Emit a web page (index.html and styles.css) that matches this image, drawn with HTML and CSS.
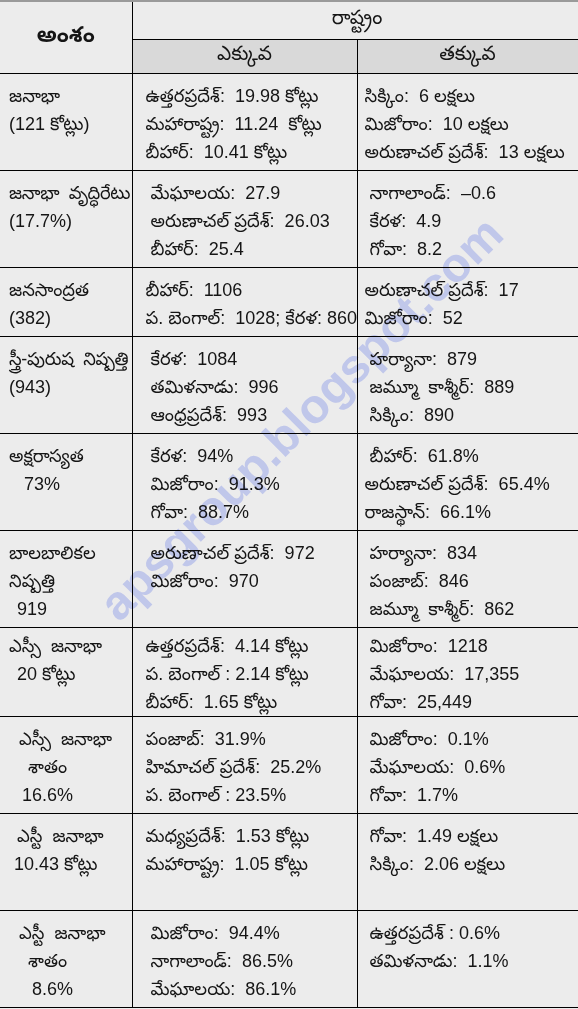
FILE: index.html
```html
<!DOCTYPE html>
<html lang="te">
<head>
<meta charset="utf-8">
<title>జనాభా గణాంకాలు</title>
<link rel="stylesheet" href="styles.css">
</head>
<body>
<div class="sheet">
<table class="grid">
  <colgroup><col class="c1"><col class="c2"><col class="c3"></colgroup>
  <thead>
    <tr class="hr1"><th rowspan="2" class="h-main">అంశం</th><th colspan="2" class="h-state">రాష్ట్రం</th></tr>
    <tr class="hr2"><th class="h-sub">ఎక్కువ</th><th class="h-sub">తక్కువ</th></tr>
  </thead>
  <tbody>
    <tr class="r3">
      <td class="k"><div>జనాభా</div><div>(121 కోట్లు)</div></td>
      <td class="m"><div>ఉత్తరప్రదేశ్:  19.98 కోట్లు</div><div>మహారాష్ట్ర:  11.24  కోట్లు</div><div>బీహార్:  10.41 కోట్లు</div></td>
      <td class="l"><div>సిక్కిం:  6 లక్షలు</div><div>మిజోరాం:  10 లక్షలు</div><div>అరుణాచల్ ప్రదేశ్:  13 లక్షలు</div></td>
    </tr>
    <tr class="r3">
      <td class="k"><div class="tk">జనాభా  వృద్ధిరేటు</div><div>(17.7%)</div></td>
      <td class="m"><div class="i1">మేఘాలయ:  27.9</div><div class="i1">అరుణాచల్ ప్రదేశ్:  26.03</div><div class="i1">బీహార్:  25.4</div></td>
      <td class="l"><div class="i1">నాగాలాండ్:  –0.6</div><div class="i1">కేరళ:  4.9</div><div class="i1">గోవా:  8.2</div></td>
    </tr>
    <tr class="r2">
      <td class="k"><div>జనసాంద్రత</div><div>(382)</div></td>
      <td class="m"><div>బీహార్:  1106</div><div>ప. బెంగాల్:  1028; కేరళ: 860</div></td>
      <td class="l"><div>అరుణాచల్ ప్రదేశ్:  17</div><div>మిజోరాం:  52</div></td>
    </tr>
    <tr class="r3">
      <td class="k"><div class="tk">స్త్రీ-పురుష  నిష్పత్తి</div><div>(943)</div></td>
      <td class="m"><div class="i1">కేరళ:  1084</div><div class="i1">తమిళనాడు:  996</div><div class="i1">ఆంధ్రప్రదేశ్:  993</div></td>
      <td class="l"><div class="i1">హర్యానా:  879</div><div class="i1">జమ్మూ  కాశ్మీర్:  889</div><div class="i1">సిక్కిం:  890</div></td>
    </tr>
    <tr class="r3">
      <td class="k"><div>అక్షరాస్యత</div><div class="i5">73%</div></td>
      <td class="m"><div class="i1">కేరళ:  94%</div><div class="i1">మిజోరాం:  91.3%</div><div class="i1">గోవా:  88.7%</div></td>
      <td class="l"><div class="i1">బీహార్:  61.8%</div><div>అరుణాచల్ ప్రదేశ్:  65.4%</div><div>రాజస్థాన్:  66.1%</div></td>
    </tr>
    <tr class="r3">
      <td class="k"><div>బాలబాలికల</div><div>నిష్పత్తి</div><div class="i2">919</div></td>
      <td class="m"><div class="i1">అరుణాచల్ ప్రదేశ్:  972</div><div class="i1">మిజోరాం:  970</div></td>
      <td class="l"><div class="i1">హర్యానా:  834</div><div class="i1">పంజాబ్:  846</div><div class="i1">జమ్మూ  కాశ్మీర్:  862</div></td>
    </tr>
    <tr class="r3 tight">
      <td class="k"><div>ఎస్సీ  జనాభా</div><div class="i2">20 కోట్లు</div></td>
      <td class="m"><div>ఉత్తరప్రదేశ్:  4.14 కోట్లు</div><div>ప. బెంగాల్ : 2.14 కోట్లు</div><div>బీహార్:  1.65 కోట్లు</div></td>
      <td class="l"><div class="i1">మిజోరాం:  1218</div><div class="i1">మేఘాలయ:  17,355</div><div class="i1">గోవా:  25,449</div></td>
    </tr>
    <tr class="r3">
      <td class="k"><div class="i3">ఎస్సీ  జనాభా</div><div class="i6">శాతం</div><div class="i4">16.6%</div></td>
      <td class="m"><div>పంజాబ్:  31.9%</div><div>హిమాచల్ ప్రదేశ్:  25.2%</div><div>ప. బెంగాల్ : 23.5%</div></td>
      <td class="l"><div class="i1">మిజోరాం:  0.1%</div><div class="i1">మేఘాలయ:  0.6%</div><div class="i1">గోవా:  1.7%</div></td>
    </tr>
    <tr class="r3">
      <td class="k"><div class="i2">ఎస్టీ  జనాభా</div><div class="i1">10.43 కోట్లు</div></td>
      <td class="m"><div>మధ్యప్రదేశ్:  1.53 కోట్లు</div><div>మహారాష్ట్ర:  1.05 కోట్లు</div></td>
      <td class="l"><div class="i1">గోవా:  1.49 లక్షలు</div><div class="i1">సిక్కిం:  2.06 లక్షలు</div></td>
    </tr>
    <tr class="r3">
      <td class="k"><div class="i3">ఎస్టీ  జనాభా</div><div class="i6">శాతం</div><div class="i7">8.6%</div></td>
      <td class="m"><div class="i1">మిజోరాం:  94.4%</div><div class="i1">నాగాలాండ్:  86.5%</div><div class="i1">మేఘాలయ:  86.1%</div></td>
      <td class="l"><div class="i1">ఉత్తరప్రదేశ్ : 0.6%</div><div class="i1">తమిళనాడు:  1.1%</div></td>
    </tr>
  </tbody>
</table>
<div class="watermark">apsgroup.blogspot.com</div>
</div>
</body>
</html>
```
FILE: styles.css
```css
html, body {
  margin: 0;
  padding: 0;
  background: #ececec;
}

.sheet {
  position: relative;
  width: 578px;
  height: 1009px;
  overflow: hidden;
  background: #ececec;
  border-top: 2px solid #9a9a9a;
  box-sizing: border-box;
}

.grid {
  border-collapse: collapse;
  table-layout: fixed;
  width: 578px;
  font-family: "Liberation Sans", "Noto Sans Telugu", "Noto Sans", sans-serif;
  font-size: 18px;
  color: #151515;
}

.c1 { width: 132px; }
.c2 { width: 225px; }
.c3 { width: 221px; }

.grid th,
.grid td {
  border: 1px solid #000;
  padding: 0;
}

.grid tr > :first-child { border-left: none; }
.grid thead tr:first-child > * { border-top: none; }

.hr1 { height: 37px; }
.hr2 { height: 34px; }

.grid .h-main {
  font-size: 22px;
  font-weight: bold;
  text-align: center;
  vertical-align: middle;
}

.grid .h-state {
  font-size: 20px;
  font-weight: normal;
  text-align: center;
  vertical-align: middle;
  padding-left: 4px;
}

.grid .h-sub {
  background: #d9d9d9;
  font-size: 20px;
  font-weight: normal;
  text-align: center;
  vertical-align: middle;
}

.grid td {
  vertical-align: top;
  white-space: pre;
  line-height: 28px;
  padding-top: 8px;
  padding-bottom: 4px;
}

.grid .r3 td { height: 84px; }
.grid .r2 td { height: 55px; }
.grid .tight td { padding-top: 4px; padding-bottom: 0; }

.grid td.k { padding-left: 9px; }
.grid td.m { padding-left: 13px; }
.grid td.l { padding-left: 7px; }

.tk { letter-spacing: -0.3px; }

.i1 { padding-left: 5px; }
.i2 { padding-left: 8px; }
.i3 { padding-left: 10px; }
.i4 { padding-left: 13px; }
.i5 { padding-left: 15px; }
.i6 { padding-left: 19px; }
.i7 { padding-left: 23px; }

.watermark {
  position: absolute;
  left: 108px;
  top: 582px;
  font-family: "Liberation Sans", Arial, sans-serif;
  font-weight: bold;
  font-size: 48px;
  line-height: 56px;
  color: #d0d7fd;
  transform: rotate(-45deg);
  transform-origin: 0 50%;
  white-space: nowrap;
  pointer-events: none;
  mix-blend-mode: multiply;
}
```
